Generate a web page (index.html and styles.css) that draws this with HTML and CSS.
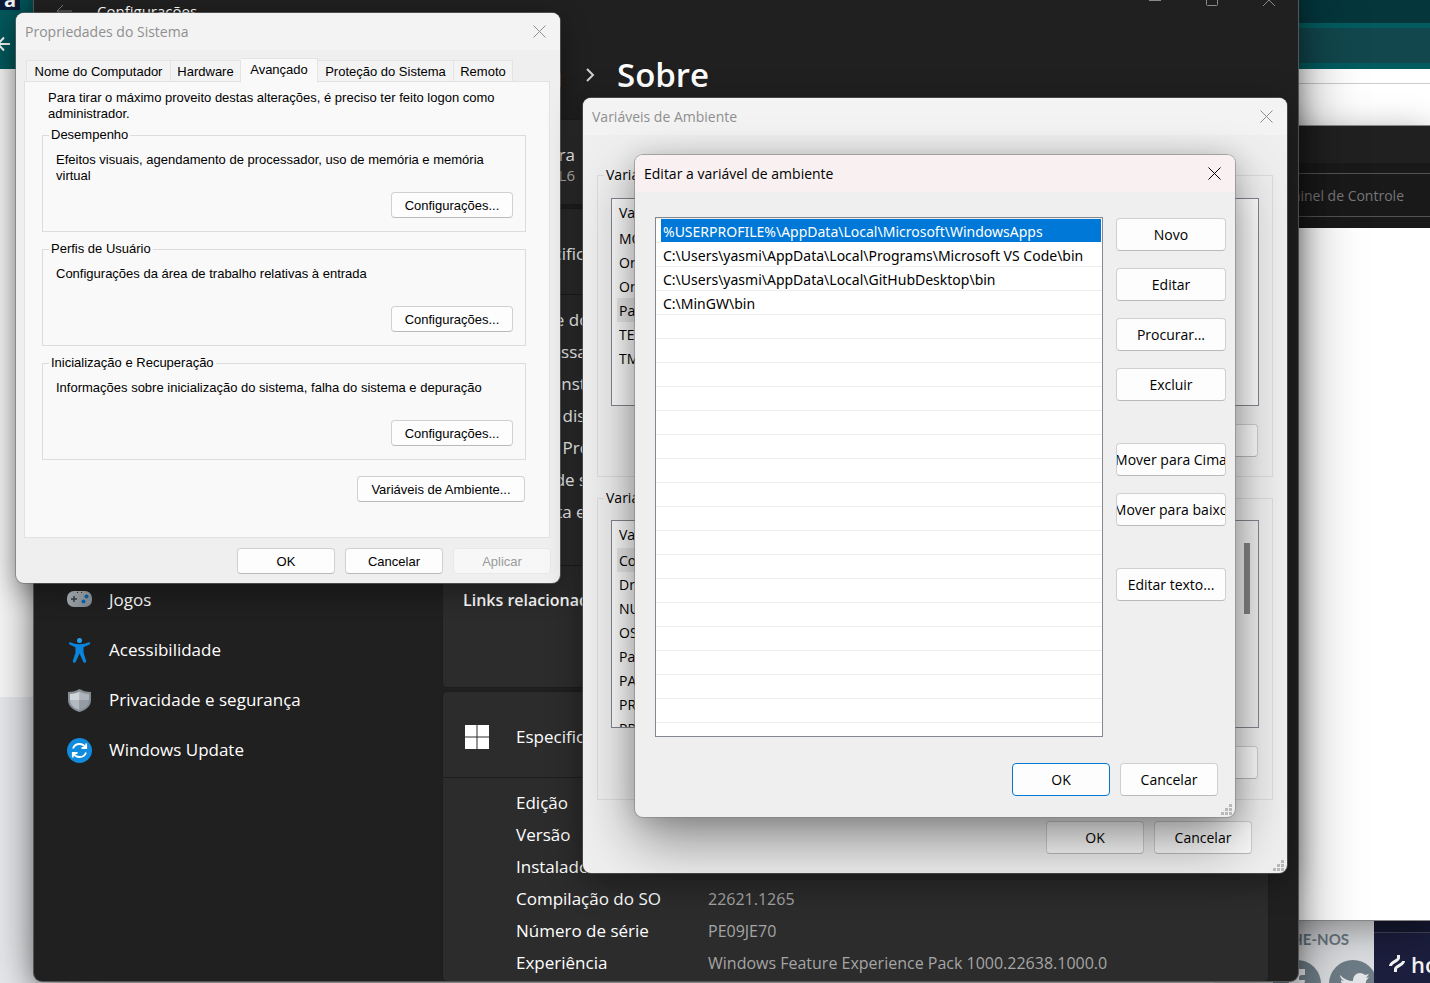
FILE: index.html
```html
<!DOCTYPE html>
<html lang="pt-BR">
<head>
<meta charset="utf-8">
<title>Variáveis de Ambiente</title>
<link rel="stylesheet" href="styles.css">
</head>
<body>
<div class="desktop">

  <div class="browser">
    <div class="browser-top">
      <div class="browser-tabs"><span class="site-tile">a</span></div>
      <div class="browser-bar">
        <svg class="back-white" width="22" height="18" viewBox="0 0 22 18"><path d="M22 9H10M16 2.500L10 9l6 6.500" fill="none" stroke="#fff" stroke-width="2"/></svg>
        <div class="address"></div>
      </div>
    </div>
    <div class="bookmarks"></div>
    <div class="page-white"></div>
    <div class="page-foot">
      <div class="follow">
        <strong class="follow-title">ACOMPANHE-NOS</strong>
        <div class="social">
          <svg width="48" height="48" viewBox="0 0 48 48"><circle cx="24" cy="24" r="24" fill="#6d7c86"/><path d="M21 42V26h-5v-6h5v-4c0-5 3-7 7-7h4v6h-3c-2 0-3 1-3 3v2h6l-1 6h-5v16z" fill="#e3e5e8"/></svg>
          <svg width="48" height="48" viewBox="0 0 48 48"><circle cx="24" cy="24" r="24" fill="#6d7c86"/><path d="M11 15c4 4 8 6 13 6 0-5 3-8 7-8 2 0 4 1 5 2l4-1-3 4 3-1-3 4c0 10-7 16-16 16-4 0-7-1-10-3 4 0 7-1 9-3-3 0-5-2-6-4h3c-3-1-5-4-5-7l3 1c-3-2-4-4-4-6z" fill="#e3e5e8"/></svg>
        </div>
      </div>
      <div class="host">
        <svg width="16" height="18" viewBox="0 0 16 18"><path d="M9.500 0v3c0 3-8 4-8 8M6.500 17v-3c0-3 8-4 8-8" fill="none" stroke="#f2f2f2" stroke-width="3"/></svg>
        <span>hostinger</span>
      </div>
    </div>
  </div>

  <section class="explorer">
    <div class="explorer-title"></div>
    <div class="explorer-search"><span>Pesquisar Painel de Controle</span></div>
  </section>

  <main class="settings">
    <header class="settings-bar">
      <svg width="16" height="14" viewBox="0 0 16 14"><path d="M16 7H1M7 1L1 7l6 6" fill="none" stroke="#777"/></svg>
      <span class="settings-name">Configurações</span>
      <div class="caption">
        <svg width="12" height="12" viewBox="0 0 12 12"><path d="M0 6.500h12" stroke="#8a8a8a"/></svg>
        <svg width="12" height="12" viewBox="0 0 12 12"><rect x=".5" y=".5" width="11" height="11" rx="1" fill="none" stroke="#8a8a8a"/></svg>
        <svg width="12" height="12" viewBox="0 0 12 12"><path d="M0 0l12 12M12 0L0 12" stroke="#8a8a8a"/></svg>
      </div>
    </header>
    <div class="settings-body">
      <nav class="nav">
        <a href="#jogos">
          <svg width="25" height="25" viewBox="0 0 25 25"><defs><linearGradient id="pad" x1="0" y1="0" x2="1" y2="1"><stop offset="0" stop-color="#bfc6cc"/><stop offset="1" stop-color="#7d858c"/></linearGradient></defs><rect y="3" width="25" height="16" rx="7" fill="url(#pad)"/><path d="M7 8v6M4 11h6" stroke="#3b4147" stroke-width="1.500"/><circle cx="19.500" cy="8.500" r="2" fill="#0a67b8"/><circle cx="16.500" cy="13.500" r="2" fill="#0a67b8"/><path d="M10 4.500h1M14 4.500h1" stroke="#30363b"/></svg>
          Jogos</a>
        <a href="#acessibilidade">
          <svg width="25" height="25" viewBox="0 0 25 25"><circle cx="12.500" cy="2.500" r="2.500" fill="#27a0ea"/><path d="M3 4.200c3 1.200 6 2 9.500 2s6.500-.8 9.500-2c1.400 0 1.400 1.800.4 2.300l-5.900 2.800v5.200l2.700 8.500c.3 1.600-2 2.600-2.900 1l-3.800-8.500L8.700 24c-.9 1.600-3.200.6-2.900-1l2.700-8.500V9.300L2.600 6.500C1.600 6 1.600 4.200 3 4.200z" fill="#0a84dc"/></svg>
          Acessibilidade</a>
        <a href="#privacidade">
          <svg width="25" height="25" viewBox="0 0 25 25"><path d="M12.500 1c3.500 2 7 3 11.500 3v8c0 6-5 10-11.500 12C6 22 1 18 1 12V4c4.500 0 8-1 11.500-3z" fill="#858c94"/><path d="M12.500 3.500c3 1.500 6 2.400 9.500 2.500V12h-9.500z" fill="#adb4bc"/><path d="M12.500 3.500C9.500 5 6.500 5.900 3 6v6h9.500z" fill="#d0d5da"/><path d="M3 12c0 5 4 8.500 9.500 10V12z" fill="#b3b9c0"/><path d="M22 12c0 5-4 8.500-9.500 10V12z" fill="#949ba3"/></svg>
          Privacidade e segurança</a>
        <a href="#update">
          <svg width="25" height="25" viewBox="0 0 25 25"><circle cx="12.500" cy="12.500" r="12.500" fill="#108bde"/><path d="M6 10.500c1-3 3.500-4.500 6.500-4.500 2.500 0 4.500 1 6 3.500M19 14.500c-1 3-3.500 4.500-6.500 4.500-2.500 0-4.500-1-6-3.500M19.200 5.500V10h-4.700M5.800 19.500V15h4.700" fill="none" stroke="#fff" stroke-width="1.800"/></svg>
          Windows Update</a>
      </nav>
      <div class="content">
        <h1><span class="crumb">Sistema</span><svg width="10" height="14" viewBox="0 0 10 14"><path d="M2 1l6 6-6 6" fill="none" stroke="#d0d0d0" stroke-width="2"/></svg><span>Sobre</span></h1>
        <section class="card device">
          <span class="device-name">ra</span>
          <span class="device-model">L6</span>
        </section>
        <section class="card">
          <div class="card-head"><span class="card-icon"></span>Especificações</div>
          <dl class="specs">
            <div><dt>Nome do dispositivo</dt></div>
            <div><dt>Processador</dt></div>
            <div><dt>RAM instalada</dt></div>
            <div><dt>ID do dispositivo</dt></div>
            <div><dt>ID do Produto</dt></div>
            <div><dt>Tipo de sistema</dt></div>
            <div><dt>Caneta e toque</dt></div>
          </dl>
          <div class="related">Links relacionados</div>
        </section>
        <section class="card last">
          <div class="card-head"><span class="card-icon"><svg width="24" height="24" viewBox="0 0 24 24"><path d="M0 0h11.500v11.500H0zM12.500 0H24v11.500H12.500zM0 12.500h11.500V24H0zM12.500 12.500H24V24H12.500z" fill="#fff"/></svg></span>Especificações do Windows</div>
          <dl class="specs">
            <div><dt>Edição</dt></div>
            <div><dt>Versão</dt></div>
            <div><dt>Instalado em</dt><dd>21/11/2022</dd></div>
            <div><dt>Compilação do SO</dt><dd>22621.1265</dd></div>
            <div><dt>Número de série</dt><dd>PE09JE70</dd></div>
            <div><dt>Experiência</dt><dd>Windows Feature Experience Pack 1000.22638.1000.0</dd></div>
          </dl>
        </section>
      </div>
    </div>
  </main>

  <section class="window props">
    <header class="title">Propriedades do Sistema
      <button class="close" aria-label="Fechar"><svg width="13" height="13" viewBox="0 0 13 13"><path d="M.5.5l12 12M12.500.5l-12 12" stroke="currentColor"/></svg></button>
    </header>
    <div class="props-body">
      <div class="tabs" role="tablist">
        <button role="tab">Nome do Computador</button>
        <button role="tab">Hardware</button>
        <button role="tab" class="active" aria-selected="true">Avançado</button>
        <button role="tab">Proteção do Sistema</button>
        <button role="tab">Remoto</button>
      </div>
      <div class="panel">
        <p class="intro">Para tirar o máximo proveito destas alterações, é preciso ter feito logon como administrador.</p>
        <fieldset><legend>Desempenho</legend>
          <p>Efeitos visuais, agendamento de processador, uso de memória e memória virtual</p>
          <button class="btn">Configurações...</button></fieldset>
        <fieldset><legend>Perfis de Usuário</legend>
          <p>Configurações da área de trabalho relativas à entrada</p>
          <button class="btn">Configurações...</button></fieldset>
        <fieldset><legend>Inicialização e Recuperação</legend>
          <p>Informações sobre inicialização do sistema, falha do sistema e depuração</p>
          <button class="btn">Configurações...</button></fieldset>
        <button class="btn env-open">Variáveis de Ambiente...</button>
      </div>
      <footer>
        <button class="btn">OK</button>
        <button class="btn">Cancelar</button>
        <button class="btn" disabled>Aplicar</button>
      </footer>
    </div>
  </section>

  <section class="window env">
    <header class="title">Variáveis de Ambiente
      <button class="close" aria-label="Fechar"><svg width="13" height="13" viewBox="0 0 13 13"><path d="M.5.5l12 12M12.500.5l-12 12" stroke="currentColor"/></svg></button>
    </header>
    <div class="env-body">
      <fieldset><legend>Variáveis de usuário</legend>
        <div class="vars">
          <table>
            <thead><tr><th>Variável</th></tr></thead>
            <tbody>
              <tr><td>MOZ</td></tr>
              <tr><td>OneDrive</td></tr>
              <tr><td>OneDrive</td></tr>
              <tr class="picked"><td>Path</td></tr>
              <tr><td>TEMP</td></tr>
              <tr><td>TMP</td></tr>
            </tbody>
          </table>
        </div>
        <button class="btn" aria-label="Excluir"></button>
      </fieldset>
      <fieldset><legend>Variáveis do sistema</legend>
        <div class="vars">
          <table>
            <thead><tr><th>Variável</th></tr></thead>
            <tbody>
              <tr class="picked"><td>ComSpec</td></tr>
              <tr><td>DriverData</td></tr>
              <tr><td>NUMBER</td></tr>
              <tr><td>OS</td></tr>
              <tr><td>Path</td></tr>
              <tr><td>PATHEXT</td></tr>
              <tr><td>PROC</td></tr>
              <tr><td>PROC</td></tr>
            </tbody>
          </table>
          <div class="scroll"><div class="thumb"></div></div>
        </div>
        <button class="btn" aria-label="Excluir"></button>
      </fieldset>
      <footer>
        <button class="btn">OK</button>
        <button class="btn">Cancelar</button>
      </footer>
    </div>
    <svg class="grip" width="12" height="12" viewBox="0 0 12 12"><path d="M8 0h3v3H8zM4 4h3v3H4zM8 4h3v3H8zM0 8h3v3H0zM4 8h3v3H4zM8 8h3v3H8z" fill="#b9b9b9"/></svg>
  </section>

  <section class="window edit">
    <header class="title">Editar a variável de ambiente
      <button class="close" aria-label="Fechar"><svg width="13" height="13" viewBox="0 0 13 13"><path d="M.5.5l12 12M12.500.5l-12 12" stroke="currentColor"/></svg></button>
    </header>
    <div class="edit-body">
      <div class="edit-main">
        <ul class="paths" role="listbox" aria-label="Caminhos">
          <li role="option" class="selected" aria-selected="true">%USERPROFILE%\AppData\Local\Microsoft\WindowsApps</li>
          <li role="option">C:\Users\yasmi\AppData\Local\Programs\Microsoft VS Code\bin</li>
          <li role="option">C:\Users\yasmi\AppData\Local\GitHubDesktop\bin</li>
          <li role="option">C:\MinGW\bin</li>
        </ul>
        <div class="actions">
          <button class="btn">Novo</button>
          <button class="btn">Editar</button>
          <button class="btn">Procurar...</button>
          <button class="btn">Excluir</button>
          <button class="btn apart">Mover para Cima</button>
          <button class="btn">Mover para baixo</button>
          <button class="btn apart">Editar texto...</button>
        </div>
      </div>
      <footer>
        <button class="btn default">OK</button>
        <button class="btn">Cancelar</button>
      </footer>
    </div>
    <svg class="grip" width="12" height="12" viewBox="0 0 12 12"><path d="M8 0h3v3H8zM4 4h3v3H4zM8 4h3v3H8zM0 8h3v3H0zM4 8h3v3H4zM8 8h3v3H8z" fill="#b9b9b9"/></svg>
  </section>

</div>
</body>
</html>
```
FILE: styles.css
```css
* { box-sizing: border-box; }
body, h1, p, ul, dl, dd, fieldset { margin: 0; padding: 0; }
body { font: 14px/20px "Open Sans", "Noto Sans", sans-serif; color: #000; }
button { font: inherit; color: inherit; padding: 0; }
svg { flex: none; display: block; }

.desktop { position: relative; height: 100vh; overflow: hidden; background: #fff; }

/* browser at the back */
.browser { height: 100%; display: flex; flex-direction: column; }
.browser-top { background: #035c60; height: 69px; }
.browser-tabs { height: 23px; background: linear-gradient(90deg, #035c60 50%, #04363c 50%); }
.site-tile { display: block; width: 20px; height: 10px; overflow: hidden; background: #0a1d3c; color: #fff; font-weight: 700; font-size: 20px; line-height: 0; padding-left: 4px; }
.browser-bar { display: flex; align-items: center; height: 46px; gap: 40px; padding: 5px 0 6px; }
.back-white { margin-left: -12px; margin-bottom: 4px; }
.address { flex: 1; height: 35px; background: #11474d; margin-left: 600px; }
.bookmarks { height: 15px; background: linear-gradient(90deg, #fff 50%, #ccc 50%) bottom / 100% 1px no-repeat; }
.page-white { height: 613px; }
.page-foot { flex: 1; background: #eef0f3; display: flex; justify-content: flex-end; align-items: flex-end; }
.follow { width: 160px; height: 63px; padding-top: 9px; background: #dcdde0; color: #6d7c86; display: flex; flex-direction: column; gap: 11px; overflow: hidden; }
.follow-title { font: 700 15px/20px Lato, sans-serif; text-align: right; margin-right: 25px; }
.social { display: flex; gap: 8px; justify-content: flex-end; margin-right: -3px; }
.host { width: 56px; height: 63px; background: #1b1e3c; color: #f2f2f2; display: flex; align-items: center; gap: 6px; padding: 25px 0 0 15px; overflow: hidden; font-size: 22px; font-weight: 600; box-shadow: inset 0 12px #15182f, inset 0 13px #3e4257; }

/* Control Panel window */
.explorer { position: absolute; top: 126px; right: 0; bottom: 63px; width: 300px; background: #fff; box-shadow: 0 0 0 1px #888, 0 8px 34px rgba(0, 0, 0, .4); }
.explorer-title { height: 37px; background: #202020; }
.explorer-search { height: 65px; background: #191919; padding: 10px 0 11px; }
.explorer-search span { display: block; border: solid #535353; border-width: 1px 0; height: 44px; line-height: 44px; text-align: right; padding-right: 26px; color: #777; }

/* Settings window */
.settings { position: absolute; left: 34px; right: 132px; top: -16px; bottom: 2px; background: #202020; color: #fff; border-radius: 8px; overflow: hidden; box-shadow: 0 0 0 1px #555, 0 16px 60px rgba(0, 0, 0, .5), 0 2px 20px rgba(0, 0, 0, .3); display: flex; flex-direction: column; font-size: 17px; }
.settings-bar { height: 54px; display: flex; align-items: center; gap: 25px; padding-left: 22px; }
.settings-name { font-size: 15px; line-height: 20px; }
.caption { margin-left: auto; align-self: flex-start; height: 32px; display: flex; align-items: center; gap: 45px; padding-right: 23px; }
.settings-body { flex: 1; display: flex; min-height: 0; }
.nav { width: 409px; padding-top: 537px; }
.nav a { display: flex; align-items: center; gap: 17px; height: 50px; padding-left: 33px; color: #fff; text-decoration: none; }
.content { flex: 1; padding-right: 30px; display: flex; flex-direction: column; gap: 5px; min-width: 0; }
h1 { display: flex; align-items: center; height: 77px; padding-bottom: 4px; font-size: 33px; line-height: 40px; font-weight: 600; gap: 22px; }
.crumb { width: 120px; display: flex; justify-content: flex-end; color: #aaa; }
.card { background: #2c2c2c; border-radius: 4px; box-shadow: 0 0 0 1px #1d1d1d; }
.device { height: 84px; padding: 24px 0 0; display: flex; flex-direction: column; }
.device span { width: 132px; text-align: right; line-height: 21px; }
.device .device-model { font-size: 15px; color: #bbb; }
.card-head { height: 86px; border-bottom: 1px solid #1d1d1d; display: flex; align-items: center; padding-top: 4px; }
.card-icon { width: 73px; padding-left: 22px; }
.specs { padding: 9px 0 0 73px; }
.specs div { display: flex; line-height: 32px; }
.specs dt { width: 192px; }
.specs dd { color: #a5a5a5; font-size: 16px; }
.related { margin-top: 37px; border-top: 1px solid #1d1d1d; height: 122px; padding: 22px 20px; font-size: 16px; line-height: 24px; font-weight: 600; }
.last { flex: 1; overflow: hidden; }

/* classic dialogs */
.window { position: absolute; background: #efefef; border-radius: 8px; overflow: hidden; display: flex; flex-direction: column; }
.title { display: flex; justify-content: space-between; align-items: center; height: 37px; background: #f3f3f3; color: #8f8f8f; padding: 0 14px 0 9px; }
.close { border: 0; background: none; display: flex; }
.btn { display: flex; align-items: center; justify-content: center; width: 98px; height: 33px; background: #fdfdfd; border: 1px solid #d0d0d0; border-bottom-color: #bababa; border-radius: 4px; white-space: nowrap; overflow: hidden; }
.btn:disabled { color: #9b9b9b; background: #f7f7f7; border-color: #e8e8e8; }
.btn.default { border-color: #0078d4; }
.window footer { display: flex; justify-content: flex-end; gap: 10px; }
fieldset { border: 1px solid #dcdcdc; min-width: 0; display: block; }
legend { padding: 0 2px; }
.grip { position: absolute; right: 2px; bottom: 1px; }

/* system properties */
.props { left: 16px; top: 13px; width: 544px; box-shadow: 0 0 0 1px rgba(110, 110, 110, .6), 0 8px 28px rgba(0, 0, 0, .4); }
.props-body { padding: 8px 10px 9px 8px; font: 13px/16px "Liberation Sans", sans-serif; }
.tabs { display: flex; align-items: flex-end; padding-left: 2px; height: 23px; }
.tabs button { height: 21px; background: #f3f3f3; border: 1px solid #e4e4e4; border-bottom: 0; border-left: 0; padding: 1px 5px 0; white-space: nowrap; min-width: 59px; }
.tabs button:nth-child(1) { width: 145px; border-left: 1px solid #e4e4e4; }
.tabs button:nth-child(2) { width: 70px; }
.tabs button:nth-child(4) { width: 136px; }
.tabs .active { position: relative; width: 77px; height: 24px; margin-bottom: -1px; background: #f9f9f9; padding: 0 5px 2px; }
.panel { border: 1px solid #e2e2e2; background: #f9f9f9; padding: 8px 23px 35px 17px; display: flex; flex-direction: column; gap: 9px; }
.intro { margin: 0 0 -4px 6px; }
.panel fieldset { padding: 0 12px 13px 13px; }
.panel legend { margin-left: -7px; }
.panel fieldset p { margin: 9px 0 8px; min-height: 32px; }
.props .btn { height: 26px; padding-top: 1px; }
.panel .btn { width: 122px; margin-left: auto; }
.panel .env-open { width: 168px; margin-top: 7px; margin-right: 1px; }
.props footer { padding-top: 10px; margin-right: -1px; }

/* environment variables */
.env { left: 583px; top: 98px; width: 704px; box-shadow: 0 0 0 1px rgba(80, 80, 80, .8), 0 8px 34px rgba(0, 0, 0, .4); }
.env-body { padding: 30px 14px 19px; display: flex; flex-direction: column; gap: 11px; }
.env fieldset { padding: 13px 13px 19px; }
.env fieldset + fieldset { padding: 12px 13px 20px; }
.env legend { margin-left: -7px; }
.vars { height: 208px; background: #fff; border: 1px solid #828790; display: flex; overflow: hidden; margin-bottom: 18px; }
.vars table { border-collapse: collapse; width: 250px; height: max-content; margin: 0 5px; }
.vars th { height: 27px; font-weight: 400; }
.vars td, .vars th { text-align: left; padding: 1px 2px 0; }
.vars td { height: 24px; }
.picked { background: #ececec; }
.scroll { width: 22px; background: #f0f0f0; padding: 22px 7px 0 8px; margin-left: auto; }
.thumb { height: 71px; width: 6px; background: #858585; }
.env fieldset .btn { margin-left: auto; margin-right: 1px; }
.env footer { padding: 10px 21px 0 0; }

/* path editor */
.edit { left: 635px; top: 155px; width: 600px; box-shadow: 0 0 0 1px rgba(130, 130, 130, .6), 0 24px 56px rgba(0, 0, 0, .42), 0 2px 24px rgba(0, 0, 0, .16); }
.edit .title { background: #f9f0f1; color: #000; }
.edit-body { padding: 25px 9px 21px 20px; }
.edit-main { display: flex; gap: 13px; }
.paths { flex: 1; height: 520px; list-style: none; border: 1px solid #828790; padding: 1px 1px 0; white-space: nowrap; overflow: hidden; font-family: "Noto Sans", sans-serif; background: repeating-linear-gradient(#fff 0 23px, #ededed 23px 24px) 0 1px / 100% 528px #fff; }
.paths li { height: 24px; line-height: 24px; padding: 1px 0 0 2px; margin-left: 4px; border-bottom: 1px solid #ededed; }
.paths .selected { background: #0078d7; color: #fff; border-color: #fff; }
.actions { display: flex; flex-direction: column; gap: 17px; padding-top: 1px; }
.actions .btn { width: 110px; }
.actions .apart { margin-top: 25px; }
.edit footer { padding: 26px 8px 0 0; }
```
